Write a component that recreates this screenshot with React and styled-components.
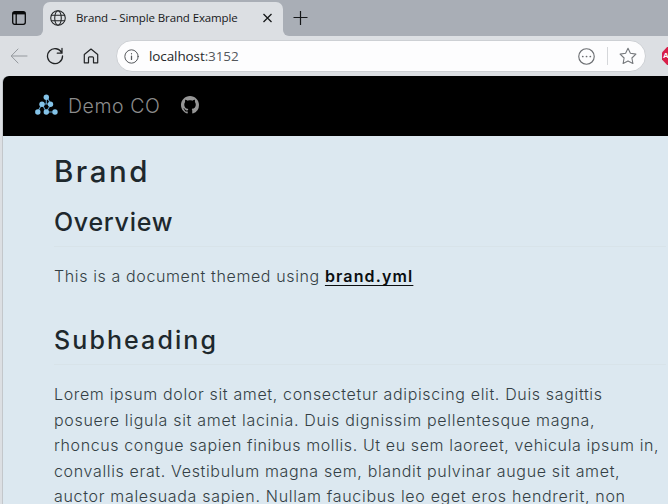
import React from 'react';
import styled, { createGlobalStyle } from 'styled-components';

const Global = createGlobalStyle`
  *{box-sizing:border-box}
  body{margin:0;background:#dcdfe3;overflow:hidden}
  h1,h2,p{margin:0}
`;
const Window = styled.div`width:668px;height:504px;overflow:hidden;display:flex;flex-direction:column;background:#dcdfe3;`;
const TabStrip = styled.header`height:36px;flex:none;display:flex;align-items:flex-end;background:#a9aeb6;`;
const WorkspaceSlot = styled.div`width:43px;height:36px;padding:11px 0 0 12px;border-radius:0 0 6px 0;background:#a9aeb6;`;
const TabRow = styled.div`display:flex;background:linear-gradient(#a9aeb6 0 18px,#dcdfe3 18px);`;
const Tab = styled.div`width:240px;height:34px;margin-top:2px;display:flex;align-items:center;padding:0 9px 2px 7px;background:#dcdfe3;border-radius:7px 7px 0 0;`;
const TabTitle = styled.span`font:11.5px/16px "Open Sans",sans-serif;letter-spacing:-.12px;color:#17181a;white-space:nowrap;margin-left:10px;flex:1;`;
const NewTab = styled.div`flex:1;height:36px;border-radius:0 0 0 6px;background:#a9aeb6;padding:10px 0 0 10px;`;
const CornerFill = styled.div`flex:1;background:linear-gradient(#a9aeb6 0 18px,#dcdfe3 18px);`;
const Toolbar = styled.div`height:40px;flex:none;display:flex;align-items:center;padding-left:10px;`;
const NavButton = styled.span`width:18px;height:18px;margin-right:18px;flex:none;svg{display:block}`;
const AddressBar = styled.div`width:530px;height:32px;flex:none;margin-left:-2px;display:flex;align-items:center;padding:0 8px 0 7px;background:#fdfdfe;border:1px solid #cdd0d4;border-radius:16px;svg{flex:none}`;
const Url = styled.span`font:13.5px/20px "Open Sans",sans-serif;letter-spacing:-.1px;color:#55585c;margin-left:10px;flex:1;b{font-weight:400;color:#25272a}`;
const Divider = styled.i`width:1px;height:18px;background:#d5d7da;margin:0 11px 0 12px;`;
const Extension = styled.div`width:17px;height:18px;flex:none;margin-left:16px;background:#d81e48;clip-path:polygon(30% 0,70% 0,100% 30%,100% 70%,70% 100%,30% 100%,0 70%,0 30%);color:#fff;font:bold 8px/18px "Liberation Sans",sans-serif;padding-left:1px;`;
const Page = styled.main`flex:1;margin-left:3px;border-radius:6px 0 0 0;overflow:hidden;background:#dce8f0;box-shadow:-1px 0 0 #c3c7cb;font-family:Inter,sans-serif;`;
const Navbar = styled.nav`height:60px;background:#000;display:flex;align-items:center;padding-left:32px;svg{flex:none;position:relative;top:-1px}`;
const BrandName = styled.span`font-size:19.5px;font-weight:300;letter-spacing:.55px;line-height:24px;color:#8c8c8c;margin:0 20.5px 0 9px;white-space:nowrap;`;
const Article = styled.article`width:612px;margin-left:51px;color:#1e282d;white-space:nowrap;`;
const Title = styled.h1`font-size:29.5px;font-weight:500;line-height:36px;letter-spacing:2.5px;padding-top:17px;height:64px;`;
const Section = styled.h2`font-size:25px;font-weight:500;line-height:30px;letter-spacing:${p => p.$ls}px;height:${p => p.$h}px;padding-top:${p => p.$top}px;border-bottom:1px solid #d8e3e9;`;
const Line = styled.p`font-size:16px;font-weight:300;line-height:25.5px;color:#343f45;letter-spacing:${p => p.$ls}px;`;
const Intro = styled(Line)`margin-top:17px;height:38px;`;
const Body = styled.div`margin-top:17px;`;
const Link = styled.a`font-weight:600;color:#0a0e10;letter-spacing:1.13px;text-decoration:underline;text-underline-offset:3px;text-decoration-skip-ink:none;text-decoration-thickness:1px;`;

const Icon = ({ s = 18, w = 1.2, c = '#222426', children }) => (
  <svg width={s} height={s} viewBox="0 0 18 18" fill="none" stroke={c} strokeWidth={w} strokeLinecap="round" strokeLinejoin="round">{children}</svg>
);

const lines = [
  ['Lorem ipsum dolor sit amet, consectetur adipiscing elit. Duis sagittis', 0.65],
  ['posuere ligula sit amet lacinia. Duis dignissim pellentesque magna,', 0.69],
  ['rhoncus congue sapien finibus mollis. Ut eu sem laoreet, vehicula ipsum in,', 0.61],
  ['convallis erat. Vestibulum magna sem, blandit pulvinar augue sit amet,', 0.65],
  ['auctor malesuada sapien. Nullam faucibus leo eget eros hendrerit, non', 0.68],
];

export default function App() {
  return (
    <Window>
      <Global />
      <TabStrip>
        <TabRow>
          <WorkspaceSlot>
            <svg width="14" height="14" viewBox="0 0 14 14" fill="none" stroke="#08090a" strokeWidth="1.3"><rect x=".7" y=".7" width="12.6" height="12.6" rx="2" /><path d="M4.2 3v10" /><path d="M1 2.2h12" strokeWidth="2.4" /></svg>
          </WorkspaceSlot>
          <Tab>
            <Icon s={16} w={1.2}><circle cx="9" cy="9" r="8.2" /><ellipse cx="9" cy="9" rx="3.7" ry="8.2" /><path d="M1.6 6h14.8M1.6 12h14.8" /></Icon>
            <TabTitle>Brand – Simple Brand Example</TabTitle>
            <svg width="13" height="10" viewBox="0 0 13 10" stroke="#151719" strokeWidth="1.3"><path d="M2.500 1l8 8M10.500 1L2.500 9" /></svg>
          </Tab>
        </TabRow>
        <CornerFill>
          <NewTab>
            <svg width="16" height="16" viewBox="0 0 16 16" stroke="#151719" strokeWidth="1.2"><path d="M7.500 1v14M.5 7.500h14" /></svg>
          </NewTab>
        </CornerFill>
      </TabStrip>
      <Toolbar>
        <NavButton><Icon c="#95999e" w={1}><path d="M1.500 9h15.500M8 2L1.200 9 8 16" /></Icon></NavButton>
        <NavButton><Icon w={1.3}><path d="M15.800 6A7.500 7.500 0 1 0 16.500 9M16 1.500v4.700h-4.700" /></Icon></NavButton>
        <NavButton><Icon w={1.2}><path d="M2.300 7.500L9 2l6.700 5.500v8.300h-4.200v-5a1 1 0 0 0-1-1h-3a1 1 0 0 0-1 1v5H2.300z" /></Icon></NavButton>
        <AddressBar>
          <Icon s={15} c="#55585c" w={1.2}><circle cx="9" cy="9" r="8" /><path d="M9 8.500v4M9 5.600v.1" strokeWidth="1.500" /></Icon>
          <Url><b>localhost</b>:3152</Url>
          <Icon s={17} c="#6b6e72" w={1.2}><circle cx="9" cy="9" r="8.200" /><path d="M5 9h.1M9 9h.1M13 9h.1" strokeWidth="1.800" /></Icon>
          <Divider />
          <Icon c="#75787c" w={1.1}><path d="M9 1.300l2.400 5 5.500.8-4 3.900 1 5.500L9 13.900l-4.900 2.600 1-5.500-4-3.900 5.500-.8z" /></Icon>
        </AddressBar>
        <Extension>A</Extension>
      </Toolbar>
      <Page>
        <Navbar>
          <svg width="24" height="22" viewBox="0 0 24 22" fill="#84c3e8" stroke="#5d9cc8" strokeWidth="1.1"><path d="M11.300 2.500V10M11.300 2.500L16 10H7L2.500 18M7 10l4.300 8L16 10M11.300 18h8.700" fill="none" /><g stroke="none"><circle cx="11.300" cy="3.200" r="2.700" /><circle cx="7" cy="10.300" r="2.700" /><circle cx="15.500" cy="10.300" r="2.700" /><circle cx="2.800" cy="18" r="2.700" /><circle cx="11.300" cy="18" r="2.700" /><circle cx="20" cy="18" r="2.700" /></g></svg>
          <BrandName>Demo CO</BrandName>
          <svg width="18" height="18" viewBox="0 0 16 16" fill="#969696"><path d="M8 0C3.580 0 0 3.580 0 8c0 3.540 2.290 6.530 5.470 7.590.4.070.55-.17.55-.38 0-.19-.01-.82-.01-1.490-2.010.37-2.530-.49-2.690-.94-.09-.23-.48-.94-.82-1.130-.28-.15-.68-.52-.01-.53.63-.01 1.080.58 1.230.82.72 1.210 1.870.87 2.330.66.07-.52.28-.87.51-1.070-1.780-.2-3.640-.89-3.640-3.950 0-.87.31-1.590.82-2.150-.08-.2-.36-1.020.08-2.120 0 0 .67-.21 2.200.82.64-.18 1.320-.27 2-.27s1.360.09 2 .27c1.530-1.040 2.200-.82 2.200-.82.44 1.100.16 1.920.08 2.120.51.56.82 1.270.82 2.150 0 3.070-1.870 3.750-3.650 3.950.29.25.54.73.54 1.480 0 1.070-.01 1.930-.01 2.200 0 .21.15.46.55.38A8.010 8.010 0 0 0 16 8c0-4.420-3.580-8-8-8z" /></svg>
        </Navbar>
        <Article>
          <Title>Brand</Title>
          <Section $ls={0.7} $h={47} $top={7}>Overview</Section>
          <Intro $ls={0.62}>This is a document themed using <Link>brand.yml</Link></Intro>
          <Section $ls={2.1} $h={63} $top={23}>Subheading</Section>
          <Body>
            {lines.map(([text, spacing]) => <Line key={text} $ls={spacing}>{text}</Line>)}
          </Body>
        </Article>
      </Page>
    </Window>
  );
}
